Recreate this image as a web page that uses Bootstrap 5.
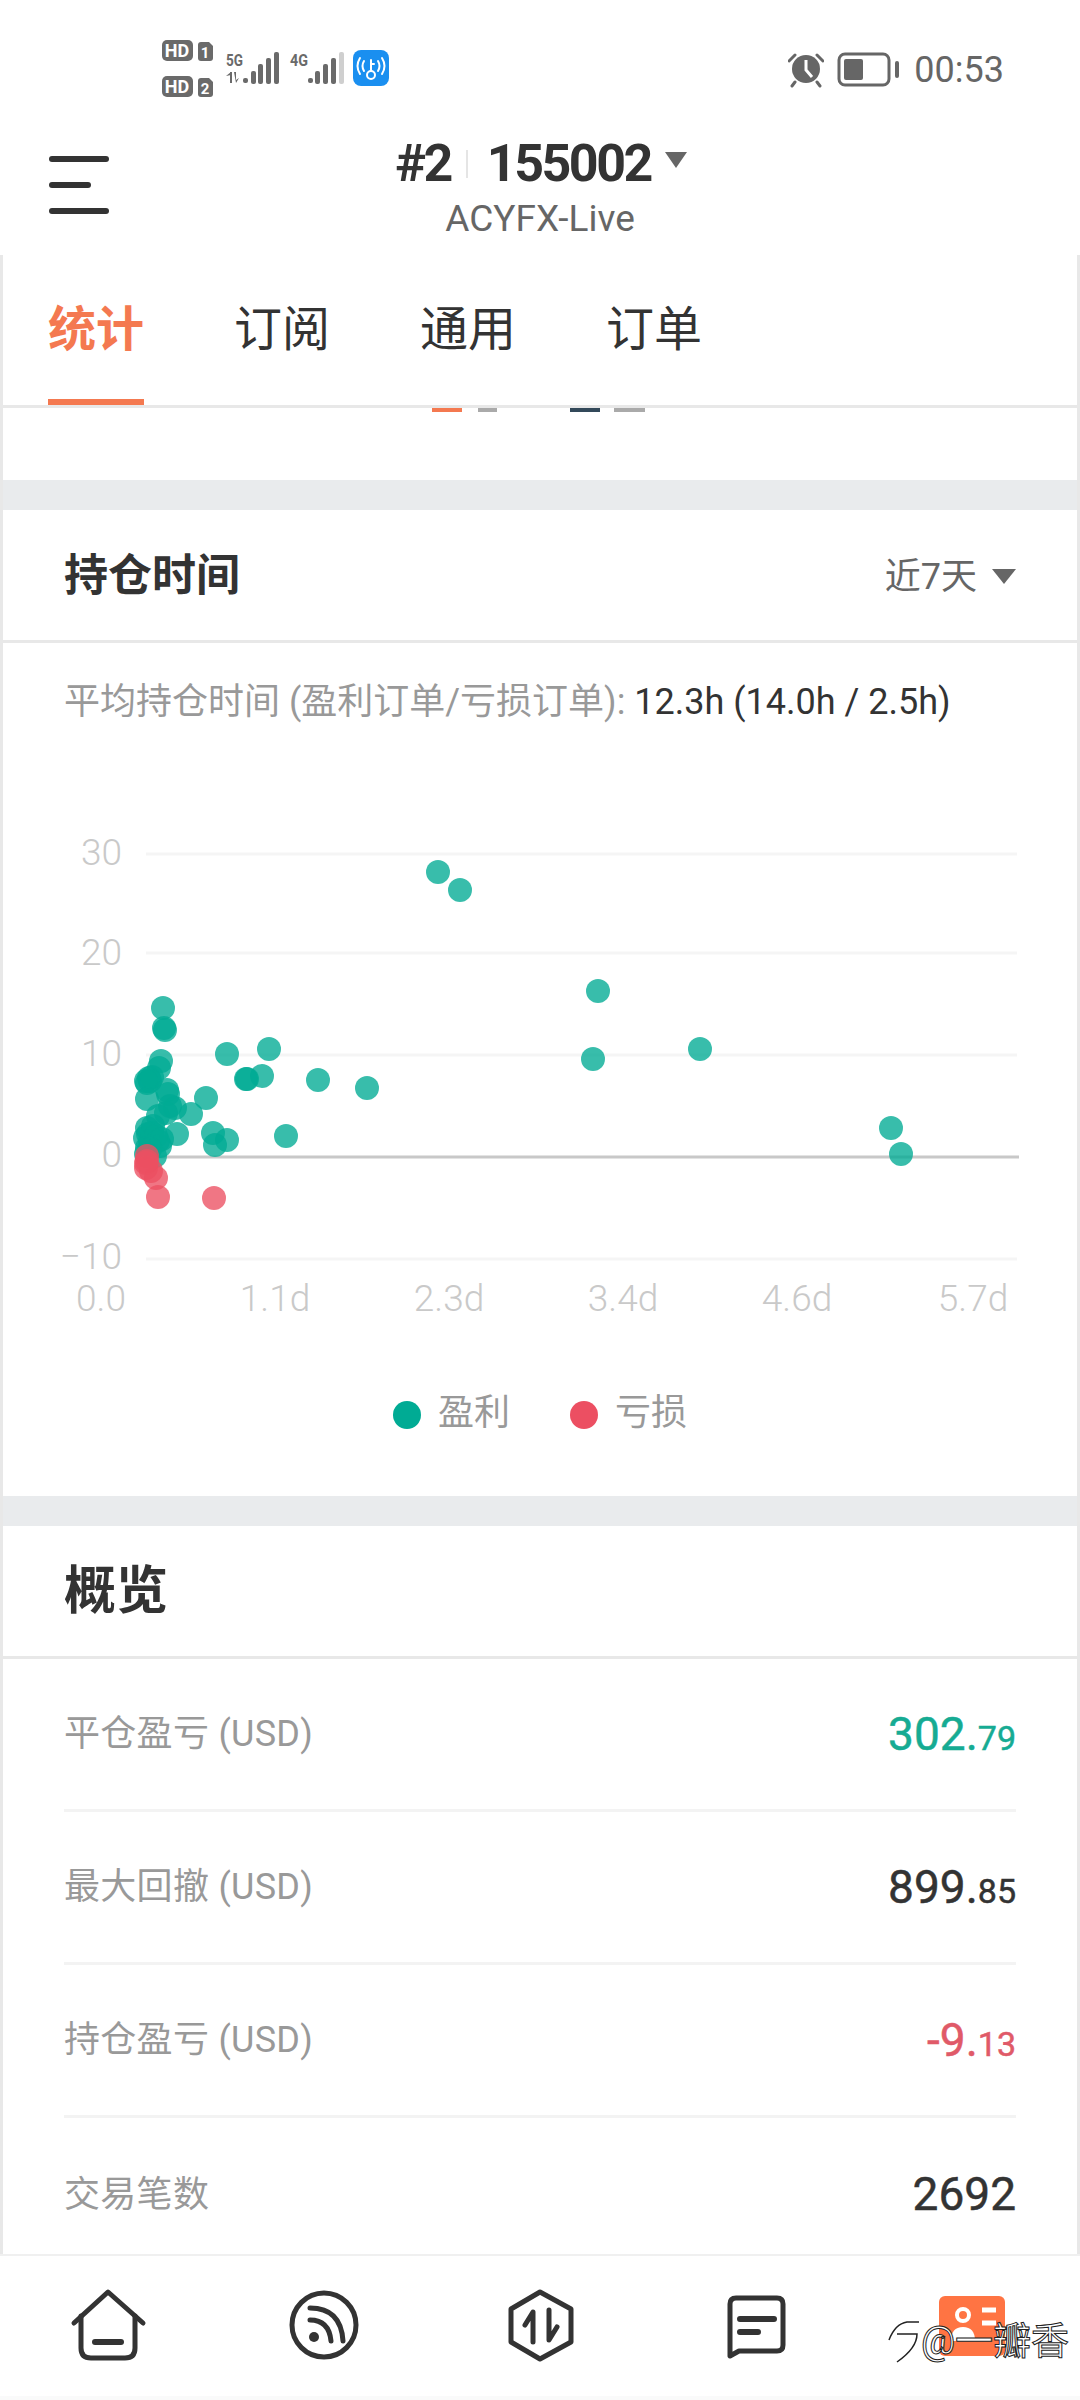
<!DOCTYPE html>
<html lang="zh">
<head>
    <meta charset="UTF-8">
    <title>持仓时间</title>
    <link rel="stylesheet" href="https://cdn.jsdelivr.net/npm/bootstrap@5.3.0/dist/css/bootstrap.min.css">
    <style>
        html, body { width: 1080px; height: 2400px; overflow: hidden; }
        body { background: #fff; color: #333; font-family: Roboto, "Noto Sans CJK SC", sans-serif; }
        .status-bar { height: 100px; padding: 40px 76px 0 162px; }
        .status-time { font-size: 36px; color: #666; line-height: 1; margin-top: 12px; margin-left: 13px; }
        .app-head { height: 155px; padding-top: 39px; }
        .burger { left: 49px; top: 56px; width: 60px; }
        .burger i { display: block; height: 6px; border-radius: 3px; background: #333; margin-bottom: 20px; }
        .burger i:nth-child(2) { width: 42px; }
        .acct-line { font-size: 52px; font-weight: 700; line-height: 50px; letter-spacing: -2.5px; color: #333; padding-left: 2px; }
        .acct-sep { width: 2px; height: 28px; background: #e5e5e5; margin: 0 19px 0 15px; }
        .acct-caret { width: 0; height: 0; border: 11px solid transparent; border-top: 16px solid #666; border-bottom: 0; margin: 0 0 8px 14px; }
        .acct-server { font-size: 37px; color: #666; line-height: 40px; margin-top: 10px; }
        .page-body { height: 1999px; border-left: 3px solid #e8e8e8; border-right: 3px solid #e8e8e8; overflow: hidden; }
        .tab-row { height: 153px; border-bottom: 3px solid #e8e8e8; padding-left: 45px; gap: 90px; }
        .tab-item { font-size: 48px; line-height: 150px; height: 150px; width: 96px; white-space: nowrap; color: #333; }
        .tab-item.on { color: #f47950; font-weight: 700; border-bottom: 6px solid #f47950; }
        .legend-cut { height: 72px; padding-left: 429px; }
        .legend-cut i { display: block; height: 4px; }
        .gap-band { height: 30px; background: #e9ebed; }
        .sec-card { border: 0; border-radius: 0; }
        .sec-head { height: 133px; padding: 3px 61px 0; border-bottom: 3px solid #e8e8e8; background: #fff; border-radius: 0 !important; }
        .sec-title { font-size: 44px; font-weight: 700; margin: 0; color: #333; }
        .sec-title.big { font-size: 52px; }
        .range-pick { font-size: 36px; color: #666; padding-left: 3px; }
        .range-caret { width: 0; height: 0; border: 12px solid transparent; border-top: 15px solid #666; border-bottom: 0; margin-left: 15px; }
        .hold-sub { font-size: 36px; color: #999; padding: 39px 61px 0; line-height: 40px; white-space: nowrap; }
        .hold-sub b { font-weight: 400; color: #333; }
        .hold-chart { display: block; width: 1074px; height: 560px; margin-top: 59px; }
        .hold-chart text { font-family: Roboto, sans-serif; font-size: 37px; font-weight: 300; fill: #c9c9c9; }
        .chart-legend { height: 155px; padding-top: 50px; font-size: 36px; color: #999; line-height: 44px; gap: 60px; }
        .legend-dot { display: inline-block; width: 28px; height: 28px; border-radius: 50%; margin-right: 17px; vertical-align: -4px; }
        .stat-list .list-group-item { height: 153px; margin: 0 61px; padding: 0; border: 0; border-bottom: 3px solid #f3f3f3; }
        .stat-list .list-group-item:last-child { border-bottom: 0; }
        .stat-name { font-size: 36px; color: #999; letter-spacing: .3px; }
        .stat-val { font-size: 46px; color: #333; -webkit-text-stroke: .5px currentColor; }
        .stat-val small { font-size: 34px; }
        .val-up { color: #16ab93; }
        .val-down { color: #e05a68; }
        .tab-bar { height: 142px; border-top: 2px solid #f0f0f0; background: #fff; }
        .tab-cell { width: 216px; }
        .foot-strip { height: 4px; background: #fafafa; }
        .mark-text { right: 11px; bottom: 32px; font-size: 38px; line-height: 44px; color: #fff; -webkit-text-stroke: 1px #222; white-space: nowrap; }
    </style>
</head>
<body>

<div class="status-bar d-flex justify-content-between align-items-start">
    <svg width="230" height="62" viewBox="162 40 230 62">
        <g fill="#6a6a6a">
            <rect x="162" y="40" width="31" height="21" rx="5"/>
            <rect x="162" y="76" width="31" height="21" rx="5"/>
            <path d="M201 42h8l4 4v12q0 3-3 3h-9q-3 0-3-3V45q0-3 3-3z"/>
            <path d="M201 78h8l4 4v12q0 3-3 3h-9q-3 0-3-3V81q0-3 3-3z"/>
            <rect x="243" y="78" width="5" height="5" rx="2"/>
            <rect x="251" y="71" width="5" height="13" rx="2"/>
            <rect x="258" y="64" width="5" height="20" rx="2"/>
            <rect x="266" y="58" width="5" height="26" rx="2"/>
            <rect x="274" y="52" width="5" height="32" rx="2"/>
            <rect x="308" y="78" width="5" height="5" rx="2"/>
            <rect x="315" y="71" width="5" height="13" rx="2"/>
            <rect x="323" y="64" width="5" height="20" rx="2"/>
            <rect x="331" y="58" width="5" height="26" rx="2"/>
            <rect x="339" y="52" width="5" height="32" rx="2" fill="#cfcfcf"/>
            <path d="M230 72h2v11h-2zM226 76l5-4v3zM234 72h2v8l3-2-3 5z"/>
        </g>
        <g font-family="Roboto, sans-serif" font-weight="700">
            <text x="177" y="57" font-size="18" fill="#fff" text-anchor="middle">HD</text>
            <text x="177" y="93" font-size="18" fill="#fff" text-anchor="middle">HD</text>
            <text x="205" y="58" font-size="15" fill="#fff" text-anchor="middle">1</text>
            <text x="205" y="94" font-size="15" fill="#fff" text-anchor="middle">2</text>
            <text x="226" y="66" font-size="17" fill="#6a6a6a" textLength="17" lengthAdjust="spacingAndGlyphs">5G</text>
            <text x="290" y="66" font-size="17" fill="#6a6a6a" textLength="18" lengthAdjust="spacingAndGlyphs">4G</text>
        </g>
        <rect x="353" y="50" width="36" height="36" rx="8" fill="#1a8ff0"/>
        <g fill="none" stroke="#fff" stroke-width="2" stroke-linecap="round">
            <circle cx="371" cy="75" r="4"/>
            <path d="M371 71V60M371 64h3M364 61q-3 5 0 10M378 61q3 5 0 10M360 58q-5 8 0 16M382 58q5 8 0 16"/>
        </g>
    </svg>
    <div class="d-flex align-items-start">
        <svg width="36" height="36" viewBox="790 52 36 36" style="margin-top:12px">
            <circle cx="808" cy="69" r="14" fill="#666"/>
            <path d="M808 60v10l6 7" fill="none" stroke="#fff" stroke-width="3"/>
            <path d="M791 61l6-6M825 61l-6-6M797 82l-3 4M819 82l3 4" stroke="#666" stroke-width="3" stroke-linecap="round"/>
        </svg>
        <svg width="64" height="36" viewBox="839 52 64 36" style="margin:12px 0 0 13px">
            <rect x="841" y="54" width="50" height="31" rx="6" fill="none" stroke="#666" stroke-width="3"/>
            <rect x="846" y="59" width="19" height="21" rx="2" fill="#666"/>
            <rect x="897" y="61" width="4" height="17" rx="2" fill="#666"/>
        </svg>
        <div class="status-time">00:53</div>
    </div>
</div>

<header class="app-head position-relative text-center">
    <div class="burger position-absolute"><i></i><i></i><i></i></div>
    <div class="acct-line d-flex justify-content-center align-items-center">
        <span>#2</span><span class="acct-sep"></span><span>155002</span><span class="acct-caret"></span>
    </div>
    <div class="acct-server">ACYFX-Live</div>
</header>

<main class="page-body">
    <div class="tab-row d-flex">
        <div class="tab-item on">统计</div>
        <div class="tab-item">订阅</div>
        <div class="tab-item">通用</div>
        <div class="tab-item">订单</div>
    </div>
    <div class="legend-cut d-flex align-items-start">
        <i style="width:30px;background:#f47950"></i>
        <i style="width:19px;background:#aaa;margin-left:16px"></i>
        <i style="width:30px;background:#33495a;margin-left:73px"></i>
        <i style="width:31px;background:#aaa;margin-left:14px"></i>
    </div>
    <div class="gap-band"></div>

    <section class="card sec-card">
        <div class="card-header sec-head d-flex justify-content-between align-items-center">
            <h2 class="sec-title">持仓时间</h2>
            <div class="range-pick d-flex align-items-center">近7天<span class="range-caret"></span></div>
        </div>
        <div class="hold-sub">平均持仓时间 (盈利订单/亏损订单): <b>12.3h (14.0h / 2.5h)</b></div>
        <svg class="hold-chart" id="hold-chart" viewBox="3 780 1074 560">
            <g stroke="#f5f5f5" stroke-width="3">
                <path d="M146 853H1017M146 952H1017M146 1054H1017M146 1258H1017"/>
            </g>
            <path d="M146 1156H1019" stroke="#c8c8c8" stroke-width="3"/>
            <g text-anchor="end">
                <text x="122" y="864">30</text>
                <text x="122" y="964">20</text>
                <text x="122" y="1065">10</text>
                <text x="122" y="1166">0</text>
                <text x="122" y="1268">−10</text>
            </g>
            <g text-anchor="middle">
                <text x="101" y="1310">0.0</text>
                <text x="275" y="1310">1.1d</text>
                <text x="449" y="1310">2.3d</text>
                <text x="623" y="1310">3.4d</text>
                <text x="797" y="1310">4.6d</text>
                <text x="973" y="1310">5.7d</text>
            </g>
        </svg>
        <div class="chart-legend d-flex justify-content-center">
            <div><span class="legend-dot" style="background:#00ab94"></span>盈利</div>
            <div><span class="legend-dot" style="background:#ec4f62"></span>亏损</div>
        </div>
    </section>
    <div class="gap-band"></div>

    <section class="card sec-card">
        <div class="card-header sec-head d-flex align-items-center">
            <h2 class="sec-title big">概览</h2>
        </div>
        <ul class="list-group list-group-flush stat-list">
            <li class="list-group-item d-flex justify-content-between align-items-center">
                <span class="stat-name">平仓盈亏 (USD)</span><span class="stat-val val-up">302.<small>79</small></span>
            </li>
            <li class="list-group-item d-flex justify-content-between align-items-center">
                <span class="stat-name">最大回撤 (USD)</span><span class="stat-val">899.<small>85</small></span>
            </li>
            <li class="list-group-item d-flex justify-content-between align-items-center">
                <span class="stat-name">持仓盈亏 (USD)</span><span class="stat-val val-down">-9.<small>13</small></span>
            </li>
            <li class="list-group-item d-flex justify-content-between align-items-center">
                <span class="stat-name">交易笔数</span><span class="stat-val">2692</span>
            </li>
        </ul>
    </section>
</main>

<nav class="tab-bar d-flex align-items-start position-relative">
    <div class="tab-cell text-center">
        <svg width="90" height="90" viewBox="62 2280 90 90" style="margin-top:24px">
            <g fill="none" stroke="#333" stroke-width="5" stroke-linecap="round" stroke-linejoin="round">
                <path d="M73 2323L107 2292L142 2323"/>
                <path d="M80 2316V2348Q80 2358 90 2358H124Q134 2358 134 2348V2316"/>
                <path d="M94 2342H120" stroke-width="6"/>
            </g>
        </svg>
    </div>
    <div class="tab-cell text-center">
        <svg width="90" height="90" viewBox="278 2280 90 90" style="margin-top:24px">
            <circle cx="323" cy="2325" r="32" fill="none" stroke="#333" stroke-width="5"/>
            <circle cx="313" cy="2337" r="5" fill="#333"/>
            <path d="M309 2320Q328 2320 330 2341M309 2308Q340 2308 342 2341" fill="none" stroke="#333" stroke-width="5" stroke-linecap="round"/>
        </svg>
    </div>
    <div class="tab-cell text-center">
        <svg width="90" height="90" viewBox="494 2280 90 90" style="margin-top:24px">
            <path d="M539 2292L570 2309V2342L539 2359L510 2342V2309Z" fill="none" stroke="#333" stroke-width="5" stroke-linejoin="round"/>
            <path d="M532 2342V2312L524 2325M548 2310V2340L556 2327" fill="none" stroke="#333" stroke-width="5" stroke-linecap="round" stroke-linejoin="round"/>
        </svg>
    </div>
    <div class="tab-cell text-center">
        <svg width="90" height="90" viewBox="710 2280 90 90" style="margin-top:24px">
            <path d="M729 2356V2304Q729 2298 735 2298H776Q782 2298 782 2304V2345Q782 2351 776 2351H738Z" fill="none" stroke="#333" stroke-width="5" stroke-linejoin="round"/>
            <path d="M739 2319H773M739 2332H757" stroke="#333" stroke-width="6" stroke-linecap="round"/>
        </svg>
    </div>
    <div class="tab-cell text-center">
        <svg width="90" height="90" viewBox="926 2280 90 90" style="margin-top:24px">
            <rect x="938" y="2296" width="66" height="60" rx="6" fill="#ff7443"/>
            <circle cx="962" cy="2315" r="6" fill="none" stroke="#fff" stroke-width="4"/>
            <path d="M950 2341Q950 2327 962 2327Q974 2327 974 2341Z" fill="#fff"/>
            <path d="M981 2310H995M981 2323H995" stroke="#fff" stroke-width="5"/>
        </svg>
    </div>
    <div class="mark-text position-absolute d-flex align-items-center">
        <svg width="34" height="46" viewBox="0 0 34 46">
            <path d="M2 22Q8 6 20 4H32M10 16H30Q30 30 10 44" fill="none" stroke="#222" stroke-width="1.5"/>
        </svg>
        <span>@一瓣香</span>
    </div>
</nav>
<div class="foot-strip"></div>

<script>
// 持仓时间散点 [x, y] 用页面坐标
const greens = [
    [438,871],[460,889],[163,1007],[164,1027],[165,1029],[161,1060],[159,1067],[149,1077],
    [147,1082],[150,1080],[146,1080],[152,1076],[147,1098],[167,1089],[168,1093],[175,1107],
    [166,1112],[158,1115],[170,1105],[191,1113],[206,1097],[227,1053],[269,1048],[262,1075],
    [247,1078],[246,1078],[318,1079],[367,1087],[286,1135],[213,1132],[227,1139],[215,1144],
    [177,1133],[147,1127],[153,1125],[145,1137],[150,1140],[158,1140],[147,1147],[155,1155],
    [146,1153],[152,1132],[160,1145],[148,1133],[156,1135],[162,1138],[150,1148],
    [598,990],[593,1058],[700,1048],[891,1127],[901,1153]
];
const reds = [[147,1155],[146,1162],[146,1167],[151,1170],[156,1177],[158,1196],[214,1197],[147,1160]];
const chart = document.getElementById('hold-chart');

function addDots(list, color) {
    list.forEach(p => {
        const c = document.createElementNS('http://www.w3.org/2000/svg', 'circle');
        c.setAttribute('cx', p[0]);
        c.setAttribute('cy', p[1]);
        c.setAttribute('r', 12);
        c.setAttribute('fill', color);
        c.setAttribute('fill-opacity', 0.78);
        chart.appendChild(c);
    });
}
addDots(greens, '#00ab94');
addDots(reds, '#ec4f62');
</script>
</body>
</html>
